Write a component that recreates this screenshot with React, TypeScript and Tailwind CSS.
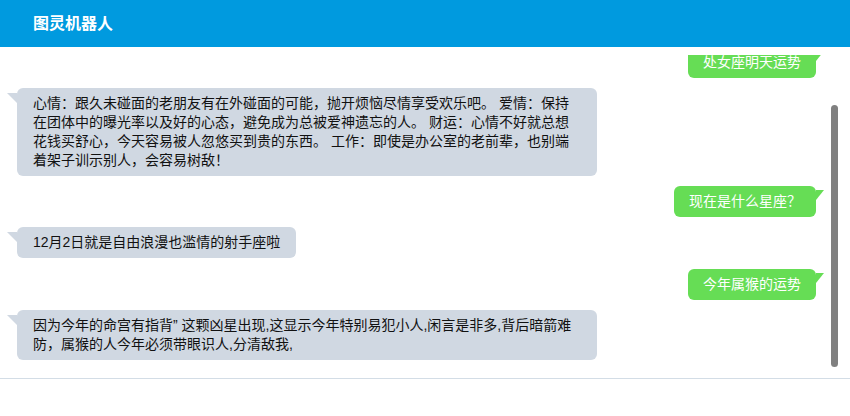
import React from "react";

const font = { fontFamily: '"Liberation Sans", "Noto Sans CJK SC", sans-serif' };

function Right({ text, className = "" }: { text: string; className?: string }) {
  return (
    <div className={"flex justify-end pr-[34px] " + className}>
      <div className="relative rounded-[6px] bg-[#66dd55] px-[15px] py-[6px] text-[14px] leading-[19px] text-white">
        {text}
        <span className="absolute right-[-8px] top-[4px] h-0 w-0 border-t-[10px] border-r-[8px] border-t-[#66dd55] border-r-transparent" />
      </div>
    </div>
  );
}

function Left({ text, className = "" }: { text: string; className?: string }) {
  return (
    <div className={"flex justify-start pl-[17px] " + className}>
      <div className="relative max-w-[580px] rounded-[6px] bg-[#d0d8e2] px-[16px] py-[6px] text-[14px] leading-[19px] text-[#111]">
        {text}
        <span className="absolute left-[-10px] top-[5px] h-0 w-0 border-t-[10px] border-l-[10px] border-t-[#d0d8e2] border-l-transparent" />
      </div>
    </div>
  );
}

export default function App() {
  return (
    <div className="h-[416px] w-[850px] overflow-hidden bg-white" style={font}>
      <div className="flex h-[47px] items-center bg-[#009adf] pl-[33px] text-[16px] font-bold text-white">
        图灵机器人
      </div>
      <div className="h-[8px]" />
      <div className="relative h-[324px] overflow-hidden border-b border-[#d3dde6]">
        <div className="mt-[-8px] flex flex-col gap-[10px]">
          <Right text="处女座明天运势" />
          <Left text="心情：跟久未碰面的老朋友有在外碰面的可能，抛开烦恼尽情享受欢乐吧。 爱情：保持在团体中的曝光率以及好的心态，避免成为总被爱神遗忘的人。 财运：心情不好就总想花钱买舒心，今天容易被人忽悠买到贵的东西。 工作：即使是办公室的老前辈，也别端着架子训示别人，会容易树敌！" />
          <Right text="现在是什么星座？" />
          <Left text="12月2日就是自由浪漫也滥情的射手座啦" />
          <Right text="今年属猴的运势" className="mt-[1px]" />
          <Left text="因为今年的命宫有指背” 这颗凶星出现,这显示今年特别易犯小人,闲言是非多,背后暗箭难防，属猴的人今年必须带眼识人,分清敌我," />
        </div>
        <div className="absolute right-[12px] top-[50px] h-[262px] w-[7px] rounded-full bg-[#808080]" />
      </div>
    </div>
  );
}
